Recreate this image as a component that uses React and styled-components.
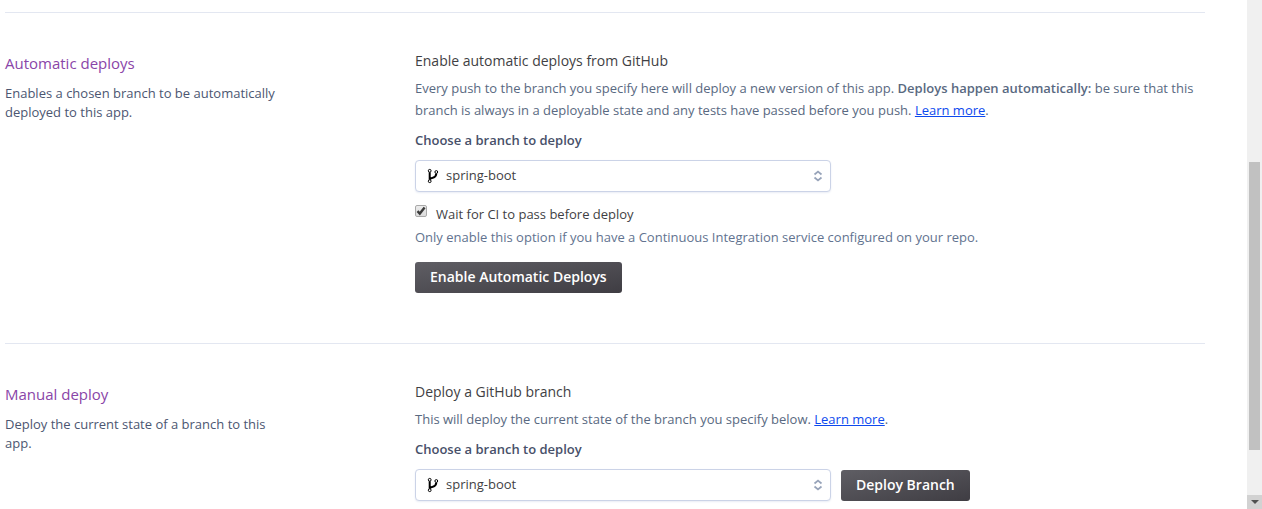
import React from 'react';
import styled, { createGlobalStyle } from 'styled-components';

const GlobalStyle = createGlobalStyle`
  * { box-sizing: border-box; }
  body {
    margin: 0;
    background: #fff;
    color: #3f3f44;
    font-family: "Open Sans", "Noto Sans", sans-serif;
    font-size: 13px;
    line-height: 20px;
  }
  h2, h3, p { margin: 0; font-weight: 400; }
`;

const Shell = styled.div`
  display: flex;
  height: 100vh;
  overflow: hidden;
`;

const Page = styled.main`
  flex: 1;
  min-width: 0;
  padding: 12px 42px 0 5px;
`;

const Section = styled.section`
  display: grid;
  grid-template-columns: 280px minmax(0, 1fr);
  column-gap: 130px;
  padding: 37px 0 50px;
  border-top: 1px solid #e3e7f1;
`;

const Title = styled.h2`
  margin-top: 2px;
  color: #8a45a8;
  font-size: 15px;
  line-height: 22px;
`;

const Summary = styled.p`
  margin-top: 10px;
  color: #4c5671;
  line-height: 19px;
`;

const Heading = styled.h3`
  font-size: 14px;
  line-height: 22px;
`;

const Text = styled.p`
  margin-top: 5px;
  color: #596981;
  line-height: 22px;
`;

const Strong = styled.b`
  font-weight: 600;
`;

const Link = styled.a`
  color: #0d49ee;
  text-decoration: underline;
`;

const FieldLabel = styled.label`
  display: block;
  margin: 9px 0 10px;
  color: #475069;
  font-weight: 600;
`;

const Actions = styled.div`
  display: flex;
  align-items: flex-end;
  gap: 10px;
`;

const SelectBox = styled.div`
  position: relative;
  width: 416px;
  height: 32px;
`;

const Select = styled.select`
  appearance: none;
  width: 100%;
  height: 100%;
  padding: 0 30px 2px;
  border: 1px solid #cbd3e7;
  border-radius: 4px;
  background: #fff;
  box-shadow: 0 1px 2px #e9edf5;
  color: #3f3f44;
  font: inherit;
`;

const SelectIcon = styled.svg`
  position: absolute;
  top: 8px;
  ${(p) => (p.$side === 'left' ? 'left: 11px;' : 'right: 8px;')}
  pointer-events: none;
`;

const CheckRow = styled.label`
  display: flex;
  gap: 9px;
  margin-top: 12px;
`;

const CheckBox = styled.span`
  display: grid;
  width: 12px;
  height: 12px;
  margin-top: 1px;

  > * { grid-area: 1 / 1; }
  > svg { visibility: hidden; pointer-events: none; }
  > input:checked + svg { visibility: visible; }
`;

const CheckInput = styled.input`
  appearance: none;
  width: 12px;
  height: 12px;
  margin: 0;
  border: 1px solid #a9a9a9;
  border-radius: 2px;
  background: linear-gradient(#ececec, #dcdcdc);
`;

const Help = styled.p`
  margin: 3px 0 15px;
  color: #62738f;
`;

const Button = styled.button`
  height: 31px;
  padding: 0 15px 2px;
  border: 0;
  border-radius: 3px;
  background: linear-gradient(to bottom right, #5f5e64, #3f3d43);
  color: #fff;
  font: inherit;
  font-size: 14px;
  font-weight: 600;
  white-space: nowrap;
`;

const ScrollBar = styled.div`
  display: flex;
  flex: none;
  flex-direction: column;
  align-items: center;
  width: 15px;
  background: #f0f0f0;
`;

const ScrollSpace = styled.div`
  flex: ${(p) => p.$share} 1 0;
`;

const ScrollThumb = styled.div`
  flex: 288 1 0;
  width: 11px;
  background: #c1c1c1;
`;

const ScrollArrow = styled.div`
  display: grid;
  flex: none;
  place-items: center;
  width: 100%;
  height: 14px;
  background: #d2d2d2;
`;

function BranchSelect({ id }) {
  return (
    <SelectBox>
      <Select id={id} defaultValue="spring-boot">
        <option>spring-boot</option>
      </Select>
      <SelectIcon $side="left" width="14" height="16" viewBox="0 0 14 16" fill="none" stroke="#000" aria-hidden="true">
        <circle cx="3.7" cy="2.8" r="1.4" />
        <circle cx="10.3" cy="4" r="1.4" />
        <circle cx="3.7" cy="13.2" r="1.4" />
        <path d="M3.7 4.3v7.4M10.3 5.5c0 3-1.6 3.7-3.6 4.3-1.6.4-2.6.9-3 1.9" strokeWidth="2" />
      </SelectIcon>
      <SelectIcon $side="right" width="10" height="16" viewBox="0 0 10 16" fill="none" stroke="#97a3b9" strokeWidth="1.7" aria-hidden="true">
        <path d="M1.5 6.5 5 3.5l3.5 3M1.5 9.5l3.5 3 3.5-3" />
      </SelectIcon>
    </SelectBox>
  );
}

export default function App() {
  return (
    <>
      <GlobalStyle />
      <Shell>
        <Page>
          <Section>
            <div>
              <Title>Automatic deploys</Title>
              <Summary>Enables a chosen branch to be automatically deployed to this app.</Summary>
            </div>
            <div>
              <Heading>Enable automatic deploys from GitHub</Heading>
              <Text>
                Every push to the branch you specify here will deploy a new version of this app.{' '}
                <Strong>Deploys happen automatically:</Strong> be sure that this branch is always in a
                deployable state and any tests have passed before you push.{' '}
                <Link href="#auto">Learn more</Link>.
              </Text>
              <FieldLabel htmlFor="auto-branch">Choose a branch to deploy</FieldLabel>
              <BranchSelect id="auto-branch" />
              <CheckRow>
                <CheckBox>
                  <CheckInput type="checkbox" defaultChecked />
                  <svg width="12" height="12" viewBox="0 0 12 12" fill="none" stroke="#3c3c3c" strokeWidth="2.4" aria-hidden="true">
                    <path d="M2.5 6.2 4.8 8.6 9.6 2.6" />
                  </svg>
                </CheckBox>
                <span>Wait for CI to pass before deploy</span>
              </CheckRow>
              <Help>Only enable this option if you have a Continuous Integration service configured on your repo.</Help>
              <Button type="button">Enable Automatic Deploys</Button>
            </div>
          </Section>
          <Section>
            <div>
              <Title>Manual deploy</Title>
              <Summary>Deploy the current state of a branch to this app.</Summary>
            </div>
            <div>
              <Heading>Deploy a GitHub branch</Heading>
              <Text>
                This will deploy the current state of the branch you specify below.{' '}
                <Link href="#manual">Learn more</Link>.
              </Text>
              <FieldLabel htmlFor="manual-branch">Choose a branch to deploy</FieldLabel>
              <Actions>
                <BranchSelect id="manual-branch" />
                <Button type="button">Deploy Branch</Button>
              </Actions>
            </div>
          </Section>
        </Page>
        <ScrollBar aria-hidden="true">
          <ScrollSpace $share={162} />
          <ScrollThumb />
          <ScrollSpace $share={45} />
          <ScrollArrow>
            <svg width="8" height="4" viewBox="0 0 8 4"><path d="M0 0h8L4 4z" fill="#505050" /></svg>
          </ScrollArrow>
        </ScrollBar>
      </Shell>
    </>
  );
}
